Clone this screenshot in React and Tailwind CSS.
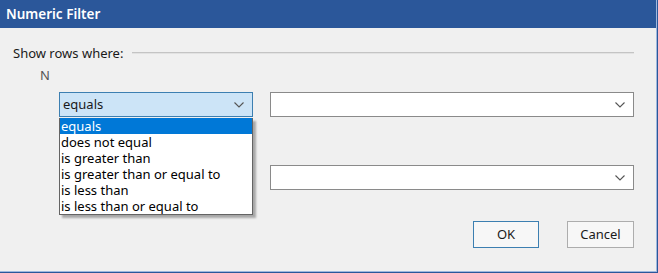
import React from "react";

const Chevron = () => (
  <svg width="10" height="6" viewBox="0 0 10 6" className="shrink-0">
    <path d="M0.5 0.5 L5 5 L9.5 0.5" fill="none" stroke="#555" strokeWidth="1.1" />
  </svg>
);

const items = [
  "equals",
  "does not equal",
  "is greater than",
  "is greater than or equal to",
  "is less than",
  "is less than or equal to",
];

export default function App() {
  return (
    <div
      className="w-[658px] h-[273px] bg-[#2b579a] pr-px pb-px overflow-hidden"
      style={{ fontFamily: '"Noto Sans", "Open Sans", Arial, sans-serif' }}
    >
      <div className="w-full h-full flex flex-col border-r border-b border-[#9fb8de]">
        <div className="h-[28px] shrink-0 bg-[#2b579a] flex items-center pl-[6px] text-white text-[13.5px] font-semibold">
          Numeric Filter
        </div>
        <div className="flex-1 bg-[#f0f0f0] relative pl-[13px] pr-[22px] text-[13px] text-[#1a1a1a]">
          <div className="mt-[17px] h-[16px] flex items-center gap-[9px]">
            <span className="leading-none">Show rows where:</span>
            <div className="flex-1 h-[2px] bg-[#c4c4c4] border-b border-[#e2e2e2]" />
          </div>
          <div className="mt-[7px] h-[16px] flex items-center pl-[27px] text-[#555]">N</div>
          <div className="mt-[8px] flex pl-[46px] gap-[17px]">
            <div className="w-[194px] h-[25px] bg-[#cce4f7] border border-[#3c7fb1] flex items-center justify-between pl-[3px] pr-[8px]">
              <span>equals</span>
              <Chevron />
            </div>
            <div className="flex-1 h-[25px] bg-white border border-[#8a8a8a] flex items-center justify-end pr-[8px]">
              <Chevron />
            </div>
          </div>
          <div className="mt-[48px] flex pl-[46px] gap-[17px]">
            <div className="w-[194px] h-[25px] bg-white border border-[#8a8a8a] flex items-center justify-end pr-[8px]">
              <Chevron />
            </div>
            <div className="flex-1 h-[25px] bg-white border border-[#8a8a8a] flex items-center justify-end pr-[8px]">
              <Chevron />
            </div>
          </div>
          <div className="mt-[31px] flex justify-end gap-[28px]">
            <button className="w-[66px] h-[27px] bg-[#f7f7f7] border border-[#3c7fb1] text-[13px] text-[#1a1a1a]">
              OK
            </button>
            <button className="w-[67px] h-[27px] bg-[#f7f7f7] border border-[#adadad] text-[13px] text-[#1a1a1a]">
              Cancel
            </button>
          </div>

          <div className="absolute left-[59px] top-[90px] w-[194px] bg-white border border-[#646464] border-t-0 shadow-[3px_3px_2px_rgba(0,0,0,0.3)] flex flex-col">
            {items.map((t, i) => (
              <div
                key={t}
                className={
                  "h-[16px] leading-[16px] pl-px whitespace-nowrap " +
                  (i === 0 ? "bg-[#0078d7] text-white" : "text-black")
                }
              >
                {t}
              </div>
            ))}
          </div>
        </div>
      </div>
    </div>
  );
}
